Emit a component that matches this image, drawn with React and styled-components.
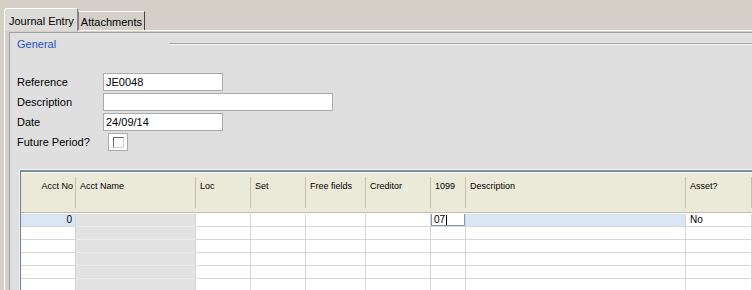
import React from 'react';
import styled, { createGlobalStyle } from 'styled-components';

const columns = [
	{ key: 'acctNo', title: 'Acct No', width: '55px', align: 'right' },
	{ key: 'acctName', title: 'Acct Name', width: '120px', shaded: true },
	{ key: 'loc', title: 'Loc', width: '55px' },
	{ key: 'set', title: 'Set', width: '55px' },
	{ key: 'free', title: 'Free fields', width: '60px' },
	{ key: 'creditor', title: 'Creditor', width: '65px' },
	{ key: 'c1099', title: '1099', width: '35px' },
	{ key: 'desc', title: 'Description', width: '220px' },
	{ key: 'asset', title: 'Asset?', width: '1fr' },
];

// only the first row has data, the rest are blank lines of the grid
const rows = [
	{ acctNo: '0', c1099: '07', asset: 'No', current: true },
	{},
	{},
	{},
	{},
	{},
];

const App = () => {
	const cols = columns.map((c) => c.width).join(' ');
	return (
		<Window>
			<GlobalStyle />
			<TabStrip>
				<Tab active>Journal Entry</Tab>
				<Tab>Attachments</Tab>
			</TabStrip>
			<Panel>
				<Frame>
					<SectionHead>
						<SectionTitle>General</SectionTitle>
						<SectionRule />
					</SectionHead>
					<Form>
						<Label>Reference</Label>
						<TextBox width='120px' defaultValue='JE0048' />
						<Label>Description</Label>
						<TextBox width='230px' defaultValue='' />
						<Label>Date</Label>
						<TextBox width='120px' defaultValue='24/09/14' />
						<Label>Future Period?</Label>
						<CheckBox>
							<CheckInner />
						</CheckBox>
					</Form>
					<GridWrap>
						<Grid>
							<HeaderRow cols={cols}>
								{columns.map((c) => (
									<HeaderCell key={c.key} align={c.align}>
										{c.title}
									</HeaderCell>
								))}
							</HeaderRow>
							{rows.map((row, i) => (
								<BodyRow key={i} first={i === 0} cols={cols}>
									{columns.map((c) => {
										const highlight =
											row.current && (c.key === 'acctNo' || c.key === 'desc');
										if (row.current && c.key === 'c1099') {
											return (
												<Cell key={c.key}>
													<CellEditor>
														{row.c1099}
														<Caret />
													</CellEditor>
												</Cell>
											);
										}
										return (
											<Cell
												key={c.key}
												align={c.align}
												shaded={c.shaded}
												highlight={highlight}>
												{row[c.key]}
											</Cell>
										);
									})}
								</BodyRow>
							))}
						</Grid>
					</GridWrap>
				</Frame>
			</Panel>
		</Window>
	);
};

export default App;

const GlobalStyle = createGlobalStyle`
	body {
		margin: 0;
		background: #d4d0c8;
		font-family: 'Liberation Sans', Arial, sans-serif;
	}
`;

const Window = styled.div`
	width: 752px;
	height: 290px;
	overflow: hidden;
	box-sizing: border-box;
	padding-top: 8px;
	background: #d4d0c8;
	display: flex;
	flex-direction: column;
	font-size: 11px;
	color: #000;
`;

const TabStrip = styled.div`
	display: flex;
	align-items: flex-end;
	height: 22px;
	padding-left: 4px;
	position: relative;
	z-index: 1;
`;

const Tab = styled.div`
	box-sizing: border-box;
	height: ${(p) => (p.active ? '23px' : '19px')};
	margin-bottom: ${(p) => (p.active ? '-1px' : '0')};
	padding: ${(p) => (p.active ? '2px 3px 0 4px' : '1px 2px 0 2px')};
	background: ${(p) => (p.active ? '#dcdbd8' : '#d4d0c8')};
	border-top: 1px solid #fff;
	border-left: 1px solid ${(p) => (p.active ? '#fff' : '#808080')};
	border-right: 1px solid ${(p) => (p.active ? '#8a8a8a' : '#404040')};
	border-top-left-radius: ${(p) => (p.active ? '3px' : '0')};
	display: flex;
	align-items: center;
	white-space: nowrap;
`;

const Panel = styled.div`
	flex: 1;
	display: flex;
	margin-left: 4px;
	padding: 1px 0 0 4px;
	border-top: 1px solid #fff;
	border-left: 1px solid #fff;
	background: #d4d0c8;
	min-height: 0;
`;

const Frame = styled.div`
	flex: 1;
	display: flex;
	flex-direction: column;
	background: #dfdfdf;
	border-top: 1px solid #a0a0a0;
	border-left: 1px solid #a0a0a0;
	min-width: 0;
`;

const SectionHead = styled.div`
	display: flex;
	align-items: center;
	height: 14px;
	margin-top: 4px;
	padding-left: 7px;
`;

const SectionTitle = styled.span`
	color: #1d4fc4;
	font-size: 11px;
`;

const SectionRule = styled.div`
	flex: 1;
	margin-left: 113px;
	border-top: 1px solid #a4a4a4;
	border-bottom: 1px solid #f4f4f4;
`;

const Form = styled.div`
	display: grid;
	grid-template-columns: 86px auto;
	grid-auto-rows: 18px;
	row-gap: 2px;
	margin-top: 22px;
	padding-left: 7px;
	align-items: center;
	justify-items: start;
`;

const Label = styled.span`
	font-size: 11px;
	white-space: nowrap;
`;

const TextBox = styled.input`
	box-sizing: border-box;
	width: ${(p) => p.width};
	height: 18px;
	margin: 0;
	padding: 0 2px;
	border: 1px solid #a7abb0;
	background: #fff;
	font-family: 'Liberation Sans', Arial, sans-serif;
	font-size: 11px;
	color: #000;
	outline: none;
`;

const CheckBox = styled.div`
	box-sizing: border-box;
	width: 20px;
	height: 18px;
	margin-left: 5px;
	border: 1px solid #a7abb0;
	background: #fff;
	display: flex;
	align-items: center;
	justify-content: center;
`;

const CheckInner = styled.div`
	width: 9px;
	height: 9px;
	background: #fff;
	border-top: 1px solid #6a6a6a;
	border-left: 1px solid #6a6a6a;
	border-right: 1px solid #d0d0d0;
	border-bottom: 1px solid #d0d0d0;
`;

const GridWrap = styled.div`
	margin: 18px 0 0 9px;
	border-top: 1px solid #f2f2f2;
	border-left: 1px solid #f2f2f2;
	flex: 1;
	display: flex;
	min-height: 0;
`;

const Grid = styled.div`
	flex: 1;
	background: #fff;
	border-top: 2px solid #7b8ea2;
	border-left: 1px solid #6e8093;
	font-size: 10px;
`;

const HeaderRow = styled.div`
	display: grid;
	grid-template-columns: ${(p) => p.cols};
	height: 41px;
	box-sizing: border-box;
	background: #ebe9d8;
	border-bottom: 1px solid #c2bea8;
	box-shadow: inset 0 1px 0 #f6f5ee;
`;

const HeaderCell = styled.div`
	position: relative;
	padding: 9px 3px 0 4px;
	font-size: 9px;
	text-align: ${(p) => p.align || 'left'};
	white-space: nowrap;
	overflow: hidden;
	&::after {
		content: '';
		position: absolute;
		right: 0;
		top: 5px;
		bottom: 4px;
		width: 1px;
		background: #c4c0ac;
		box-shadow: 1px 0 0 #fbfaf4;
	}
`;

const BodyRow = styled.div`
	display: grid;
	grid-template-columns: ${(p) => p.cols};
	height: 13px;
	margin-top: ${(p) => (p.first ? '1px' : '0')};
`;

const Cell = styled.div`
	box-sizing: border-box;
	border-right: 1px solid #d6d6d6;
	border-bottom: 1px solid ${(p) => (p.shaded ? '#ececec' : '#d6d6d6')};
	padding: 0 3px 0 4px;
	line-height: 12px;
	text-align: ${(p) => p.align || 'left'};
	white-space: nowrap;
	overflow: hidden;
	background: ${(p) => (p.highlight ? '#dbe6f5' : p.shaded ? '#e2e2e2' : '#fff')};
`;

const CellEditor = styled.div`
	box-sizing: border-box;
	height: 13px;
	margin-top: -1px;
	margin-left: -4px;
	width: 34px;
	border: 1px solid #7f9db9;
	background: #fff;
	padding-left: 2px;
	line-height: 11px;
	display: flex;
	align-items: center;
`;

const Caret = styled.span`
	display: inline-block;
	width: 1px;
	height: 10px;
	margin-left: 1px;
	background: #000;
`;
